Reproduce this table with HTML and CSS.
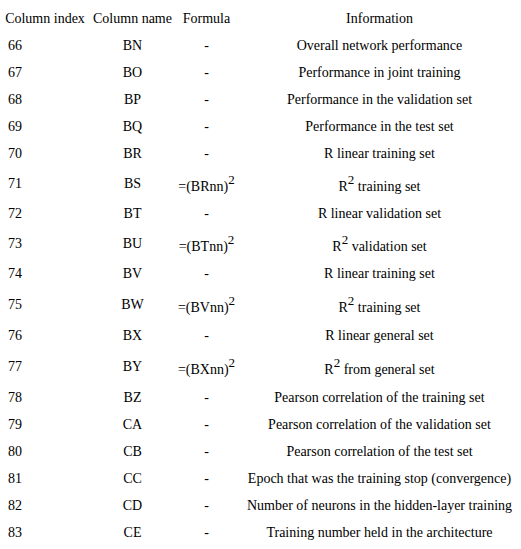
FILE: index.html
```
<!DOCTYPE html>
<html>
<head>
<meta charset="utf-8">
<link rel="stylesheet" href="styles.css">
</head>
<body>
<table class="data">
<colgroup><col class="c1"><col class="c2"><col class="c3"><col class="c4"></colgroup>
<thead>
<tr><th class="idx-h">Column index</th><th>Column name</th><th>Formula</th><th>Information</th></tr>
</thead>
<tbody>
<tr><td class="idx">66</td><td>BN</td><td>-</td><td>Overall network performance</td></tr>
<tr><td class="idx">67</td><td>BO</td><td>-</td><td>Performance in joint training</td></tr>
<tr><td class="idx">68</td><td>BP</td><td>-</td><td>Performance in the validation set</td></tr>
<tr><td class="idx">69</td><td>BQ</td><td>-</td><td>Performance in the test set</td></tr>
<tr><td class="idx">70</td><td>BR</td><td>-</td><td>R linear training set</td></tr>
<tr class="sq"><td class="idx">71</td><td>BS</td><td class="f">=(BRnn)<sup>2</sup></td><td>R<sup>2</sup> training set</td></tr>
<tr><td class="idx">72</td><td>BT</td><td>-</td><td>R linear validation set</td></tr>
<tr class="sq"><td class="idx">73</td><td>BU</td><td class="f">=(BTnn)<sup>2</sup></td><td>R<sup>2</sup> validation set</td></tr>
<tr><td class="idx">74</td><td>BV</td><td>-</td><td>R linear training set</td></tr>
<tr class="sq tall"><td class="idx">75</td><td>BW</td><td class="f">=(BVnn)<sup>2</sup></td><td>R<sup>2</sup> training set</td></tr>
<tr><td class="idx">76</td><td>BX</td><td>-</td><td>R linear general set</td></tr>
<tr class="sq tall"><td class="idx">77</td><td>BY</td><td class="f">=(BXnn)<sup>2</sup></td><td>R<sup>2</sup> from general set</td></tr>
<tr><td class="idx">78</td><td>BZ</td><td>-</td><td>Pearson correlation of the training set</td></tr>
<tr><td class="idx">79</td><td>CA</td><td>-</td><td>Pearson correlation of the validation set</td></tr>
<tr><td class="idx">80</td><td>CB</td><td>-</td><td>Pearson correlation of the test set</td></tr>
<tr><td class="idx">81</td><td>CC</td><td>-</td><td>Epoch that was the training stop (convergence)</td></tr>
<tr><td class="idx">82</td><td>CD</td><td>-</td><td>Number of neurons in the hidden-layer training</td></tr>
<tr><td class="idx">83</td><td>CE</td><td>-</td><td>Training number held in the architecture</td></tr>
</tbody>
</table>
</body>
</html>
```
FILE: styles.css
```
html, body {
  margin: 0;
  padding: 0;
  background: #ffffff;
}
body {
  font-family: "Liberation Serif", "Times New Roman", serif;
  font-size: 14px;
  color: #000000;
}
.data {
  border-collapse: collapse;
  width: 521px;
  table-layout: fixed;
  margin-top: 5px;
}
.c1 { width: 90px; }
.c2 { width: 85px; }
.c3 { width: 63px; }
.c4 { width: 283px; }
.data th,
.data td {
  font-weight: normal;
  text-align: center;
  vertical-align: middle;
  padding: 0;
  height: 27px;
  white-space: nowrap;
  line-height: 16px;
}
.data td.idx {
  text-align: left;
  padding-left: 8px;
}
.data th.idx-h {
  text-align: center;
}
.data sup {
  font-size: 13px;
  line-height: 16px;
  vertical-align: 7px;
}
.data tr.sq td {
  height: 33px;
}
.data tr.tall td {
  height: 35px;
}
```
